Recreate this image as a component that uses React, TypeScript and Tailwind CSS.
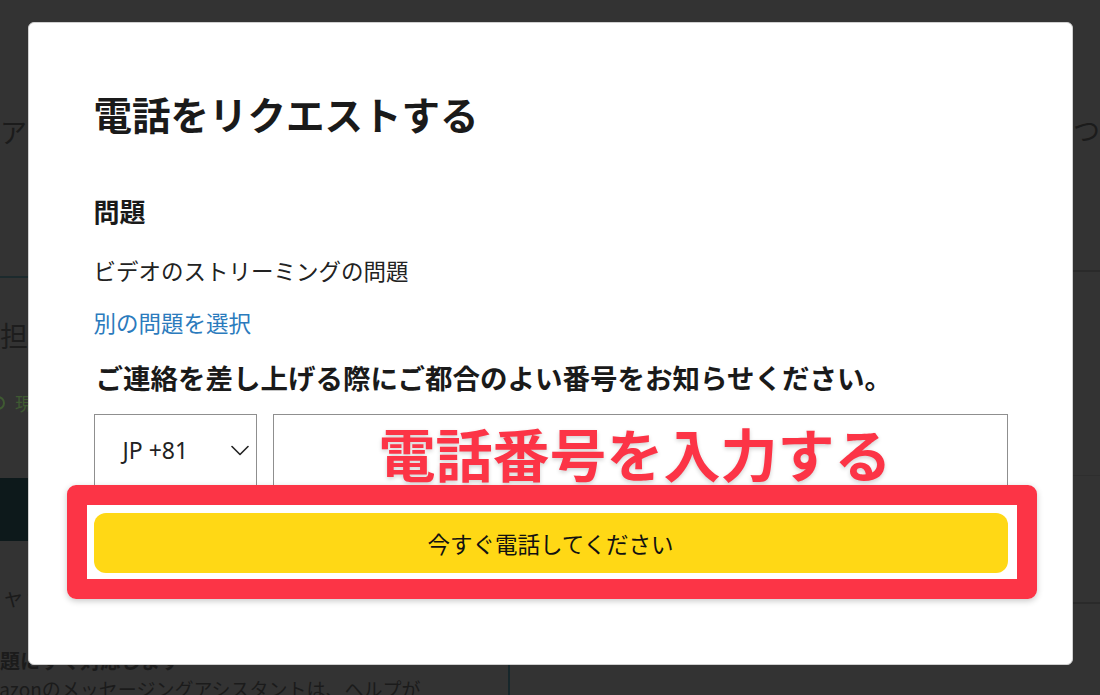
import React from "react";

function Chevron() {
  return (
    <svg width="18" height="11" viewBox="0 0 18 11" fill="none">
      <path d="M1 1.5L9 9.5L17 1.5" stroke="#222" strokeWidth="1.6" strokeLinecap="round" strokeLinejoin="round" />
    </svg>
  );
}

export default function App() {
  return (
    <div className="relative h-[695px] w-[1100px] overflow-hidden bg-[#333333] font-['Noto_Sans_CJK_JP','Noto_Sans',sans-serif] text-[#1b1b1b]">
      {/* dimmed page behind the dialog */}
      <div className="grid h-full grid-cols-[510px_590px]">
        <div className="flex flex-col">
          <div className="mt-[116px] h-[32px] whitespace-nowrap text-[27px] leading-[32px]">アカウントについて</div>
          <div className="mt-[128px] border-t-2 border-[#1c2a2d]" />
          <div className="mt-[42px] h-[30px] whitespace-nowrap text-[28px] leading-[30px] text-[#1d1d1d]">担当者</div>
          <div className="ml-[-9px] mt-[42px] flex h-[22px] items-center gap-[10px] whitespace-nowrap text-[18px] leading-[22px] text-[#3f5a32]">
            <span className="inline-block h-[14px] w-[14px] rounded-full border-2 border-[#3f5a32]" />
            <span>現在</span>
          </div>
          <div className="mt-[64px] h-[63px] bg-[#0d191b]" />
          <div className="mt-[42px] h-[24px] whitespace-nowrap pl-[2px] text-[22px] leading-[24px]">ャット</div>
          <div className="flex flex-1 flex-col border-r-2 border-[#17272b] pt-[42px]">
            <div className="h-[24px] whitespace-nowrap text-[20px] font-bold leading-[24px]">題にすぐ対応します</div>
            <div className="ml-[-30px] mt-[4px] h-[24px] whitespace-nowrap text-[19px] leading-[24px]">Amazonのメッセージングアシスタントは、ヘルプが</div>
          </div>
        </div>
        <div className="flex flex-col">
          <div className="ml-[563px] mt-[114px] h-[32px] whitespace-nowrap text-[27px] leading-[32px]">ついて</div>
          <div className="mt-[124px] border-t-2 border-[#2a2a2a]" />
          <div className="mt-[203px] border-t border-[#2e2e2e]" />
          <div className="mt-[126px] border-t-2 border-[#2a2a2a]" />
        </div>
      </div>

      {/* dialog */}
      <div className="absolute inset-0 flex justify-center pt-[22px]">
        <div className="flex h-[643px] w-[1045px] flex-col rounded-[6px] border border-[#d0d0d0] bg-white pl-[65px] pr-[64px] pt-[67px] text-[#1a1a1a]">
          <h1 className="h-[46px] text-[38.5px] font-bold leading-[46px]">電話をリクエストする</h1>
          <h2 className="mt-[59px] h-[32px] text-[26px] font-bold leading-[32px]">問題</h2>
          <p className="mt-[28px] h-[30px] text-[22.5px] leading-[30px] text-[#222]">ビデオのストリーミングの問題</p>
          <a className="mt-[22px] h-[30px] text-[22.5px] leading-[30px] text-[#2b7bbd]">別の問題を選択</a>
          <p className="mt-[23px] h-[34px] whitespace-nowrap pl-[2px] text-[27.5px] font-bold leading-[34px]">ご連絡を差し上げる際にご都合のよい番号をお知らせください。</p>

          <div className="mt-[20px] flex h-[80px] gap-[16px]">
            <div className="flex w-[163px] items-start justify-between border border-[#8f8f8f] pl-[28px] pr-[7px] pt-[20px]">
              <span className="font-['Noto_Sans','Inter',sans-serif] text-[23px] leading-[30px] text-[#222]">JP +81</span>
              <span className="pt-[10px]"><Chevron /></span>
            </div>
            <div className="relative flex-1 border border-[#8f8f8f]">
              <div className="absolute inset-0 flex items-start justify-center pr-[10px] pt-[2px]">
                <span className="text-[57px] font-bold leading-[70px] text-[#fc3446] [text-shadow:0_2px_4px_rgba(0,0,0,0.18)]">電話番号を入力する</span>
              </div>
            </div>
          </div>

          <div className="relative mt-[19px]">
            <button className="flex h-[60px] w-full items-center justify-center rounded-[12px] bg-[#ffd815] text-[22.5px] leading-[30px] text-[#111]">
              今すぐ電話してください
            </button>
            <div className="pointer-events-none absolute -bottom-[26px] -left-[27px] -right-[29px] -top-[28px] rounded-[9px] border-[20px] border-[#fc3446] shadow-[0_2px_6px_rgba(0,0,0,0.22)]" />
          </div>
        </div>
      </div>
    </div>
  );
}
